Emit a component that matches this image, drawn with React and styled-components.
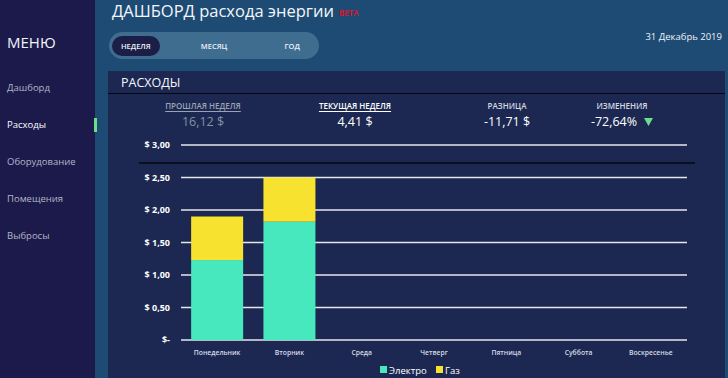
import React from "react";
import styled, { createGlobalStyle } from "styled-components";

const GlobalStyle = createGlobalStyle`
  html, body {
    margin: 0;
    padding: 0;
    background: #1d4b74;
    font-family: "Open Sans", "Noto Sans", sans-serif;
  }
  #root {
    width: 728px;
    height: 378px;
    overflow: hidden;
  }
`;

const Page = styled.div`
  display: flex;
  width: 728px;
  height: 378px;
`;

const Sidebar = styled.nav`
  width: 95px;
  flex-shrink: 0;
  background: #1b1a4a;
  padding: 31px 0 0 7px;
  box-sizing: border-box;
`;

const MenuTitle = styled.div`
  color: #f2f4fa;
  font-size: 15px;
  line-height: 22px;
  margin-bottom: 28px;
`;

const MenuItem = styled.div`
  position: relative;
  color: ${(p) => (p.active ? "#ffffff" : "#b4b6c8")};
  font-size: 9.5px;
  line-height: 14px;
  height: 37px;

  &::after {
    content: "";
    display: ${(p) => (p.active ? "block" : "none")};
    position: absolute;
    right: -2px;
    top: 0;
    width: 3px;
    height: 14px;
    background: #6fdc8c;
  }
`;

const Main = styled.main`
  flex: 1;
  display: flex;
  flex-direction: column;
  padding: 1px 3px 0 13px;
  min-width: 0;
`;

const Header = styled.header`
  display: flex;
  justify-content: space-between;
  height: 70px;
`;

const HeaderLeft = styled.div`
  display: flex;
  flex-direction: column;
`;

const Title = styled.h1`
  margin: 0 0 9px 4px;
  font-weight: 400;
  font-size: 16.5px;
  line-height: 20px;
  color: #f4f6fb;
  white-space: nowrap;
`;

const Beta = styled.span`
  color: #e8102a;
  font-size: 8px;
  font-weight: 600;
  margin-left: 5px;
  vertical-align: 1px;
`;

const Tabs = styled.div`
  display: flex;
  align-items: center;
  width: 210px;
  height: 27px;
  margin-left: 1px;
  padding: 0 3px;
  box-sizing: border-box;
  background: #3e6d90;
  border-radius: 14px;
`;

const Tab = styled.div`
  width: ${(p) => p.w}px;
  height: 20px;
  display: flex;
  align-items: center;
  justify-content: center;
  border-radius: 10px;
  background: ${(p) => (p.active ? "#1b1f47" : "transparent")};
  color: #eef2f8;
  font-size: 7.5px;
  font-weight: 600;
`;

const DateLabel = styled.div`
  color: #eef2f8;
  font-size: 9.5px;
  padding-top: 29px;
  padding-right: 3px;
`;

const Panel = styled.section`
  flex: 1;
  background: #1c2851;
  display: flex;
  flex-direction: column;
`;

const PanelHeader = styled.div`
  height: 22px;
  border-bottom: 1.5px solid #05070f;
  color: #f4f6fb;
  font-size: 12.5px;
  line-height: 24px;
  padding-left: 13px;
`;

const Stats = styled.div`
  display: grid;
  grid-template-columns: 152px 152px 152px 78px;
  padding-left: 19px;
  padding-top: 6px;
  height: 35px;
`;

const Stat = styled.div`
  display: flex;
  flex-direction: column;
  align-items: center;
`;

const StatLabel = styled.div`
  font-size: 8px;
  line-height: 11px;
  font-weight: 600;
  color: ${(p) => p.color};
  text-decoration: ${(p) => (p.underline ? "underline" : "none")};
  text-underline-offset: 2px;
  white-space: nowrap;
`;

const StatValue = styled.div`
  display: flex;
  align-items: center;
  gap: 7px;
  font-size: 12.5px;
  line-height: 18px;
  margin-top: 2px;
  color: ${(p) => p.color};
  white-space: nowrap;
`;

const Chart = styled.svg`
  display: block;
  font-family: "Open Sans", "Noto Sans", sans-serif;
`;

const gridY = [10, 42.5, 75, 107.5, 140, 172.5, 205];
const yLabels = ["$ 3,00", "$ 2,50", "$ 2,00", "$ 1,50", "$ 1,00", "$ 0,50", "$-"];
const days = [
  "Понедельник",
  "Вторник",
  "Среда",
  "Четверг",
  "Пятница",
  "Суббота",
  "Воскресенье",
];
const data = [
  { electro: 1.23, gas: 0.67 },
  { electro: 1.82, gas: 0.68 },
];
const X0 = 73;
const X1 = 579;
const BASE = 205;
const SCALE = 65;
const STEP = (X1 - X0) / 7;

const ExpenseChart = () => (
  <Chart width="617" height="243" viewBox="0 0 617 243">
    {gridY.map((y, i) => (
      <g key={i}>
        <line x1={X0} x2={X1} y1={y} y2={y} stroke="#e4e6ec" strokeWidth="1.4" />
        <text
          x="62"
          y={y + 3}
          textAnchor="end"
          fill="#ffffff"
          fontSize="9"
          fontWeight="700"
        >
          {yLabels[i]}
        </text>
      </g>
    ))}
    <line x1="31" x2="587" y1="28" y2="28" stroke="#05070f" strokeWidth="1.4" />
    {data.map((d, i) => {
      const x = X0 + STEP * i + STEP / 2 - 26;
      const he = d.electro * SCALE;
      const hg = d.gas * SCALE;
      return (
        <g key={i}>
          <rect x={x} y={BASE - he} width="52" height={he} fill="#48e8bf" />
          <rect x={x} y={BASE - he - hg} width="52" height={hg} fill="#f7e22f" />
        </g>
      );
    })}
    {days.map((d, i) => (
      <text
        key={d}
        x={X0 + STEP * i + STEP / 2}
        y="220"
        textAnchor="middle"
        fill="#d6dae6"
        fontSize="6.8"
        fontWeight="600"
      >
        {d}
      </text>
    ))}
    <rect x="272" y="231" width="7" height="7" fill="#48e8bf" />
    <text x="281" y="238.5" fill="#ffffff" fontSize="9.5">
      Электро
    </text>
    <rect x="328" y="231" width="7" height="7" fill="#f7e22f" />
    <text x="337" y="238.5" fill="#ffffff" fontSize="9.5">
      Газ
    </text>
  </Chart>
);

const menu = ["Дашборд", "Расходы", "Оборудование", "Помещения", "Выбросы"];

export default function App() {
  return (
    <>
      <GlobalStyle />
      <Page>
        <Sidebar>
          <MenuTitle>МЕНЮ</MenuTitle>
          {menu.map((m) => (
            <MenuItem key={m} active={m === "Расходы" ? 1 : 0}>
              {m}
            </MenuItem>
          ))}
        </Sidebar>
        <Main>
          <Header>
            <HeaderLeft>
              <Title>
                ДАШБОРД расхода энергии<Beta>BETA</Beta>
              </Title>
              <Tabs>
                <Tab w={48} active={1}>НЕДЕЛЯ</Tab>
                <Tab w={110}>МЕСЯЦ</Tab>
                <Tab w={48}>ГОД</Tab>
              </Tabs>
            </HeaderLeft>
            <DateLabel>31 Декабрь 2019</DateLabel>
          </Header>
          <Panel>
            <PanelHeader>РАСХОДЫ</PanelHeader>
            <Stats>
              <Stat>
                <StatLabel color="#9aa2b4" underline={1}>ПРОШЛАЯ НЕДЕЛЯ</StatLabel>
                <StatValue color="#8591a6">16,12 $</StatValue>
              </Stat>
              <Stat>
                <StatLabel color="#ffffff" underline={1}>ТЕКУЩАЯ НЕДЕЛЯ</StatLabel>
                <StatValue color="#ffffff">4,41 $</StatValue>
              </Stat>
              <Stat>
                <StatLabel color="#d4d8e2">РАЗНИЦА</StatLabel>
                <StatValue color="#ffffff">-11,71 $</StatValue>
              </Stat>
              <Stat>
                <StatLabel color="#d4d8e2">ИЗМЕНЕНИЯ</StatLabel>
                <StatValue color="#ffffff">
                  -72,64%
                  <svg width="9" height="8" viewBox="0 0 9 8">
                    <polygon points="0,0 9,0 4.5,8" fill="#6fdc8c" />
                  </svg>
                </StatValue>
              </Stat>
            </Stats>
            <ExpenseChart />
          </Panel>
        </Main>
      </Page>
    </>
  );
}
